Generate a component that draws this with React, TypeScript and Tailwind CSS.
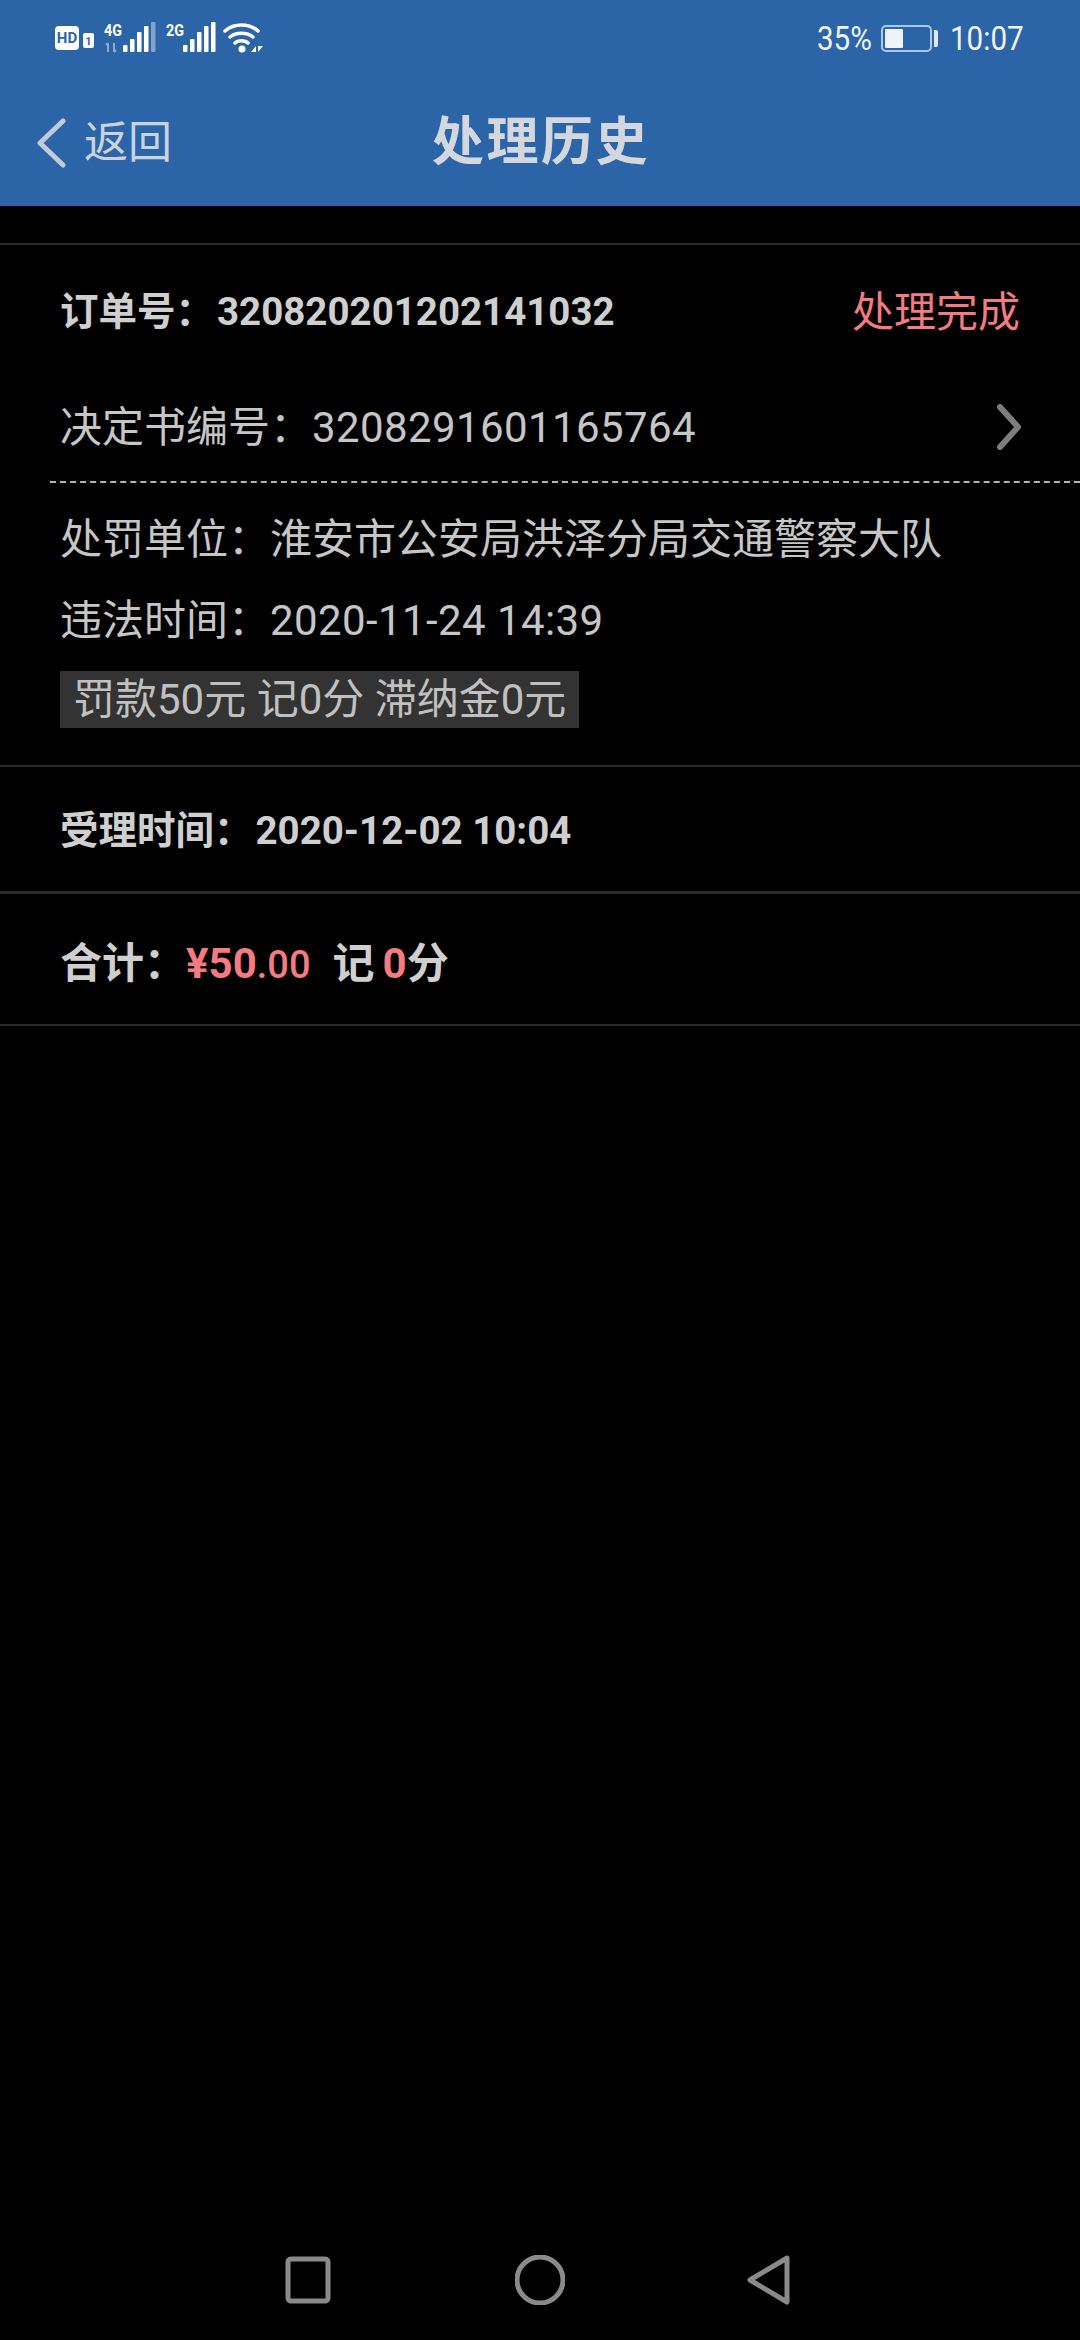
const font = "font-['Roboto','Noto_Sans_CJK_SC',sans-serif]"

function SignalBars({ x, dimLast }: { x: number; dimLast?: boolean }) {
  const heights = [7, 13, 20, 26, 30]
  return (
    <>
      {heights.map((h, i) => (
        <rect
          key={i}
          x={x + i * 7}
          y={30 - h}
          width="4.5"
          height={h}
          rx="1"
          fill="#fff"
          opacity={dimLast && i === 4 ? 0.4 : 1}
        />
      ))}
    </>
  )
}

function StatusIcons() {
  return (
    <svg width="210" height="56" viewBox="0 -12 210 56" className="block">
      <rect x="0" y="4" width="24" height="24" rx="4" fill="#fff" />
      <text x="12" y="21" textAnchor="middle" fontSize="15" fontWeight="700" fontFamily="Roboto" fill="#2c64a8">HD</text>
      <rect x="28" y="11" width="11" height="15" rx="2" fill="#fff" />
      <text x="33.5" y="23" textAnchor="middle" fontSize="11" fontWeight="700" fontFamily="Roboto" fill="#2c64a8">1</text>

      <text x="49" y="14" fontSize="17" fontWeight="700" fontFamily="Roboto" fill="#fff" textLength="18" lengthAdjust="spacingAndGlyphs">4G</text>
      <path d="M53 21v9M51 23l2-2M59 30v-9M59 30l2-2" stroke="#fff" strokeOpacity="0.45" strokeWidth="2" fill="none" />
      <SignalBars x={68} dimLast />

      <text x="111" y="14" fontSize="17" fontWeight="700" fontFamily="Roboto" fill="#fff" textLength="18" lengthAdjust="spacingAndGlyphs">2G</text>
      <SignalBars x={128} />

      <path d="M170 9c9-8 24-8 33 0M175 15c6-5 17-5 23 0M180 21c3-3 10-3 13 0" stroke="#fff" strokeWidth="3.5" fill="none" strokeLinecap="round" />
      <circle cx="187" cy="27" r="3.5" fill="#fff" />
      <path d="M196 30l5-6v6zM203 24l5 0l-5 6z" fill="#fff" />
    </svg>
  )
}

function Divider({ thick }: { thick?: boolean }) {
  return <div className={thick ? 'h-[3px] bg-[#2d2d2d]' : 'h-[2px] bg-[#2a2a2a]'} />
}

export default function App() {
  return (
    <div className={`flex h-[2340px] w-[1080px] flex-col overflow-hidden bg-black text-[#cfcfcf] ${font}`}>
      <header className="h-[206px] bg-[#2c64a8]">
        <div className="flex h-[76px] items-center justify-between pl-[55px] pr-[57px] text-[#f0f5fb]">
          <StatusIcons />
          <div className="flex items-center text-[34px]">
            <span className="inline-block w-[54px] origin-left scale-x-[0.87] whitespace-nowrap">35%</span>
            <div className="ml-[10px] flex h-[27px] w-[51px] items-center rounded-[5px] border-2 border-[#a9c8ee] p-[2px]">
              <div className="h-full w-[18px] rounded-[1px] bg-[#eef3fa]" />
            </div>
            <div className="ml-[2px] h-[17px] w-[4px] rounded-r-[2px] bg-[#dfe9f5]" />
            <span className="ml-[12px] inline-block w-[73px] origin-left scale-x-[0.87] whitespace-nowrap">10:07</span>
          </div>
        </div>
        <div className="relative flex h-[130px] items-center justify-center pt-[4px]">
          <div className="absolute left-[36px] top-[42px] flex items-center text-[#c9d3e0]">
            <svg width="30" height="50" viewBox="0 0 30 50" fill="none">
              <path d="M27 3 4 25l23 22" stroke="#c2cbd8" strokeWidth="5" strokeLinecap="round" strokeLinejoin="round" />
            </svg>
            <span className="ml-[18px] text-[44px] leading-none">返回</span>
          </div>
          <h1 className="ml-[2px] text-[52px] font-bold leading-none tracking-[2.6px] text-[#d4d8de]">处理历史</h1>
        </div>
      </header>

      <div className="h-[37px]" />
      <Divider />

      <section>
        <div className="flex h-[136px] items-center justify-between pl-[60px] pr-[60px] pb-[2px]">
          <div className="text-[38.5px] font-bold">
            订单号：<span className="ml-[3px]">320820201202141032</span>
          </div>
          <div className="text-[42px] text-[#f47c80]">处理完成</div>
        </div>
        <div className="flex h-[100px] items-start justify-between pl-[60px] pr-[58px] pt-[17px]">
          <div className="text-[42px] leading-[60px] text-[#c6c6c6]">
            决定书编号：<span className="tracking-[0.4px]">3208291601165764</span>
          </div>
          <svg width="26" height="46" viewBox="0 0 26 46" fill="none" className="mt-[6px]">
            <path d="M4 3 22 23 4 43" stroke="#7d7d7d" strokeWidth="6" strokeLinecap="round" strokeLinejoin="round" />
          </svg>
        </div>
        <div className="ml-[50px] border-t-2 border-dashed border-[#b5b5b5]" />
        <div className="pl-[60px] pt-[29px] text-[42px] leading-[56px] text-[#c6c6c6]">
          <div>处罚单位：淮安市公安局洪泽分局交通警察大队</div>
          <div className="mt-[25px]">
            违法时间：<span className="tracking-[0.4px]">2020-11-24 14:39</span>
          </div>
          <div className="mt-[22px] inline-block h-[57px] bg-[#333333] px-[13px] text-[42px] leading-[57px] text-[#c0c0c0]">
            罚款50元 记0分 滞纳金0元
          </div>
        </div>
      </section>

      <div className="h-[37px]" />
      <Divider />
      <div className="flex h-[124px] items-center pt-[4px] pl-[60px] text-[38.5px] font-bold">
        <span>受理时间：</span>
        <span className="ml-[3px]">2020-12-02 10:04</span>
      </div>
      <Divider thick />
      <div className="flex h-[130px] items-center pt-[9px] pl-[60px] text-[42px] font-bold">
        <span>合计：</span>
        <span className="text-[#f47c80]">
          ¥50<span className="text-[38px] font-medium">.00</span>
        </span>
        <span className="ml-[22px]">记</span>
        <span className="ml-[8px] text-[#f47c80]">0</span>
        <span>分</span>
      </div>
      <Divider />

      <div className="flex-1" />
      <nav className="flex h-[120px] items-start justify-between pl-[285px] pr-[289px] pt-[35px]">
        <svg width="48" height="50" viewBox="0 0 48 50" fill="none">
          <rect x="3" y="4" width="40" height="42" rx="3" stroke="#8a8a8a" strokeWidth="5" />
        </svg>
        <svg width="50" height="50" viewBox="0 0 50 50" fill="none">
          <ellipse cx="25" cy="25" rx="23" ry="23" stroke="#8a8a8a" strokeWidth="5" />
        </svg>
        <svg width="44" height="50" viewBox="0 0 44 50" fill="none">
          <path d="M40 3 3 25l37 22z" stroke="#8a8a8a" strokeWidth="5" strokeLinejoin="round" />
        </svg>
      </nav>
    </div>
  )
}
